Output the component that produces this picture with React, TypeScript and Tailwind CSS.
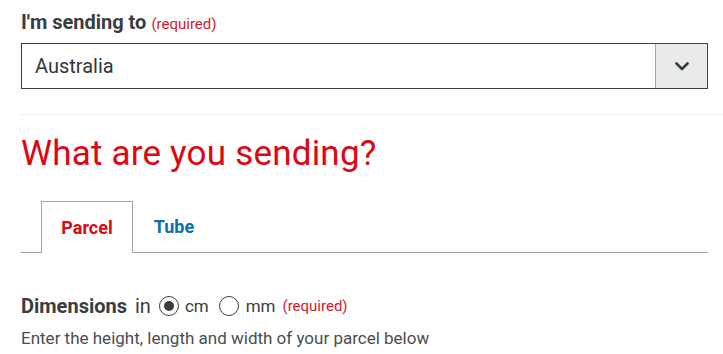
import React from "react";

export default function App() {
  return (
    <div className="w-[723px] h-[354px] overflow-hidden bg-white text-[#333] font-['Roboto',sans-serif]">
      <div className="pl-[21px] pr-[15px] pt-[10px]">
        <div className="flex items-baseline gap-[5px] leading-[24px]">
          <span className="text-[20px] font-bold text-[#3a3d40]">I'm sending to</span>
          <span className="text-[15px] text-[#d0202f]">(required)</span>
        </div>
        <div className="mt-[7px] flex h-[46px] border border-[#3d4043]">
          <div className="flex-1 flex items-center pl-[13px] text-[20px] text-[#333639]">Australia</div>
          <div className="w-[52px] flex items-center justify-center bg-[#e9eaea] border-l border-[#a3a6a8]">
            <svg width="14" height="9" viewBox="0 0 14 9" fill="none">
              <path d="M1.5 1.5 L7 7 L12.5 1.5" stroke="#3a3d40" strokeWidth="2.6" strokeLinecap="round" strokeLinejoin="round" />
            </svg>
          </div>
        </div>
      </div>
      <div className="ml-[21px] mt-[25px] border-t border-[#efefef]" />
      <div className="pl-[21px] pr-[15px]">
        <h1 className="mt-[19px] text-[35px] leading-[40px] text-[#dd0612] font-normal tracking-[0.2px]">What are you sending?</h1>
        <div className="mt-[27px] flex border-b border-[#a3a6a8] h-[52px]">
          <div className="ml-[20px] w-[92px] -mb-px border border-b-0 border-[#a3a6a8] bg-white flex items-center justify-center text-[18px] font-bold text-[#dd0612]">Parcel</div>
          <div className="w-[82px] flex items-center justify-center text-[18px] font-bold text-[#0d70a6]">Tube</div>
        </div>
        <div className="mt-[41px] flex items-center leading-[24px]">
          <span className="text-[20px] font-bold text-[#3a3d40]">Dimensions</span>
          <span className="ml-[8px] text-[20px] text-[#3a3d40]">in</span>
          <span className="ml-[8px] w-[20px] h-[20px] rounded-full border-[1.5px] border-[#3a3d40] flex items-center justify-center">
            <span className="w-[10px] h-[10px] rounded-full bg-[#3a3d40]" />
          </span>
          <span className="ml-[6px] text-[17px] text-[#3a3d40]">cm</span>
          <span className="ml-[10px] w-[20px] h-[20px] rounded-full border-[1.5px] border-[#3a3d40]" />
          <span className="ml-[7px] text-[17px] text-[#3a3d40]">mm</span>
          <span className="ml-[7px] text-[15px] text-[#d0202f]">(required)</span>
        </div>
        <div className="mt-[9px] text-[17px] leading-[22px] text-[#4a4d50]">Enter the height, length and width of your parcel below</div>
      </div>
    </div>
  );
}
